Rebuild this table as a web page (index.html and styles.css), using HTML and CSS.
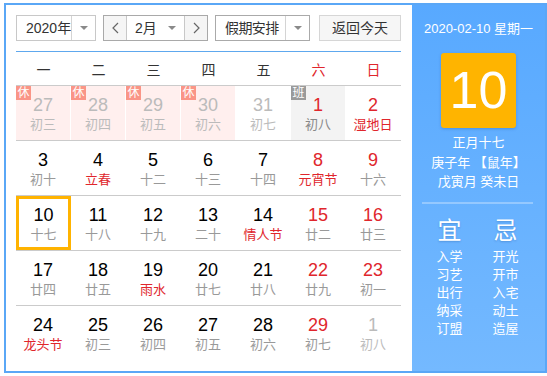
FILE: index.html
```html
<!DOCTYPE html>
<html lang="zh-CN">
<head>
<meta charset="utf-8">
<title>万年历</title>
<link rel="stylesheet" href="styles.css">
</head>
<body>
<div class="calendar">
  <div class="main">
    <div class="toolbar">
      <div class="select year">
        <span class="label">2020年</span>
        <span class="caret-box"><i class="caret"></i></span>
      </div>
      <div class="month-group">
        <span class="nav"><svg width="7" height="12" viewBox="0 0 7 12"><path d="M6 1 L1 6 L6 11" fill="none" stroke="#666" stroke-width="1.2"/></svg></span>
        <span class="month">
          <span class="label">2月</span>
          <i class="caret"></i>
        </span>
        <span class="nav"><svg width="7" height="12" viewBox="0 0 7 12"><path d="M1 1 L6 6 L1 11" fill="none" stroke="#666" stroke-width="1.2"/></svg></span>
      </div>
      <div class="select holiday">
        <span class="label">假期安排</span>
        <span class="caret-box"><i class="caret"></i></span>
      </div>
      <div class="today-btn">返回今天</div>
    </div>
    <div class="weekdays">
      <span>一</span><span>二</span><span>三</span><span>四</span><span>五</span><span class="red">六</span><span class="red">日</span>
    </div>
    <div class="week">
      <div class="cell rest other"><b class="badge">休</b><span class="num">27</span><span class="lunar">初三</span></div>
      <div class="cell rest other"><b class="badge">休</b><span class="num">28</span><span class="lunar">初四</span></div>
      <div class="cell rest other"><b class="badge">休</b><span class="num">29</span><span class="lunar">初五</span></div>
      <div class="cell rest other"><b class="badge">休</b><span class="num">30</span><span class="lunar">初六</span></div>
      <div class="cell other"><span class="num">31</span><span class="lunar">初七</span></div>
      <div class="cell work weekend"><b class="badge gray">班</b><span class="num">1</span><span class="lunar">初八</span></div>
      <div class="cell weekend"><span class="num">2</span><span class="lunar fest">湿地日</span></div>
    </div>
    <div class="week">
      <div class="cell"><span class="num">3</span><span class="lunar">初十</span></div>
      <div class="cell"><span class="num">4</span><span class="lunar fest">立春</span></div>
      <div class="cell"><span class="num">5</span><span class="lunar">十二</span></div>
      <div class="cell"><span class="num">6</span><span class="lunar">十三</span></div>
      <div class="cell"><span class="num">7</span><span class="lunar">十四</span></div>
      <div class="cell weekend"><span class="num">8</span><span class="lunar fest">元宵节</span></div>
      <div class="cell weekend"><span class="num">9</span><span class="lunar">十六</span></div>
    </div>
    <div class="week">
      <div class="cell selected"><span class="num">10</span><span class="lunar">十七</span></div>
      <div class="cell"><span class="num">11</span><span class="lunar">十八</span></div>
      <div class="cell"><span class="num">12</span><span class="lunar">十九</span></div>
      <div class="cell"><span class="num">13</span><span class="lunar">二十</span></div>
      <div class="cell"><span class="num">14</span><span class="lunar fest">情人节</span></div>
      <div class="cell weekend"><span class="num">15</span><span class="lunar">廿二</span></div>
      <div class="cell weekend"><span class="num">16</span><span class="lunar">廿三</span></div>
    </div>
    <div class="week">
      <div class="cell"><span class="num">17</span><span class="lunar">廿四</span></div>
      <div class="cell"><span class="num">18</span><span class="lunar">廿五</span></div>
      <div class="cell"><span class="num">19</span><span class="lunar fest">雨水</span></div>
      <div class="cell"><span class="num">20</span><span class="lunar">廿七</span></div>
      <div class="cell"><span class="num">21</span><span class="lunar">廿八</span></div>
      <div class="cell weekend"><span class="num">22</span><span class="lunar">廿九</span></div>
      <div class="cell weekend"><span class="num">23</span><span class="lunar">初一</span></div>
    </div>
    <div class="week">
      <div class="cell"><span class="num">24</span><span class="lunar fest">龙头节</span></div>
      <div class="cell"><span class="num">25</span><span class="lunar">初三</span></div>
      <div class="cell"><span class="num">26</span><span class="lunar">初四</span></div>
      <div class="cell"><span class="num">27</span><span class="lunar">初五</span></div>
      <div class="cell"><span class="num">28</span><span class="lunar">初六</span></div>
      <div class="cell weekend"><span class="num">29</span><span class="lunar">初七</span></div>
      <div class="cell other"><span class="num">1</span><span class="lunar">初八</span></div>
    </div>
  </div>
  <div class="panel">
    <div class="date-line">2020-02-10 星期一</div>
    <div class="big-day">10</div>
    <div class="info">正月十七</div>
    <div class="info">庚子年 【鼠年】</div>
    <div class="info">戊寅月 癸未日</div>
    <div class="divider"></div>
    <div class="yiji">
      <div class="col">
        <div class="head">宜</div>
        <div class="item">入学</div>
        <div class="item">习艺</div>
        <div class="item">出行</div>
        <div class="item">纳采</div>
        <div class="item">订盟</div>
      </div>
      <div class="col">
        <div class="head">忌</div>
        <div class="item">开光</div>
        <div class="item">开市</div>
        <div class="item">入宅</div>
        <div class="item">动土</div>
        <div class="item">造屋</div>
      </div>
    </div>
  </div>
</div>
</body>
</html>
```
FILE: styles.css
```css
html, body {
  margin: 0;
  padding: 0;
  background: #fff;
  overflow: hidden;
}
body {
  font-family: "Liberation Sans", "Noto Sans CJK SC", sans-serif;
  color: #333;
}
.calendar {
  margin: 3px 0 0 4px;
  width: 543px;
  height: 370px;
  box-sizing: border-box;
  border: 2px solid #5aa7f6;
  display: flex;
}
.main {
  width: 406px;
  box-sizing: border-box;
  padding: 10px 11px 0 10px;
}
.toolbar {
  display: flex;
  height: 26px;
  padding-bottom: 10px;
  border-bottom: 1px solid #5ea8ee;
  font-size: 14px;
  color: #333;
  white-space: nowrap;
}
.select {
  display: flex;
  box-sizing: border-box;
  height: 26px;
  border: 1px solid #c8c8c8;
  background: #fff;
}
.select .label {
  flex: 1;
  min-width: 0;
  line-height: 24px;
  padding-left: 9px;
  white-space: nowrap;
}
.caret-box {
  flex: none;
  width: 23px;
  border-left: 1px solid #d4d4d4;
  display: flex;
  align-items: center;
  justify-content: center;
}
.caret {
  display: block;
  width: 0;
  height: 0;
  border-left: 4px solid transparent;
  border-right: 4px solid transparent;
  border-top: 4px solid #8a8a8a;
}
.year { width: 80px; }
.month-group {
  margin-left: 7px;
  width: 105px;
  height: 26px;
  box-sizing: border-box;
  border: 1px solid #a9a9a9;
  display: flex;
}
.nav {
  width: 22px;
  background: #f5f5f5;
  display: flex;
  align-items: center;
  justify-content: center;
}
.month {
  flex: 1;
  display: flex;
  align-items: center;
  border-left: 1px solid #c8c8c8;
  border-right: 1px solid #c8c8c8;
  background: #fff;
}
.month .label {
  line-height: 24px;
  padding-left: 8px;
  flex: 1;
}
.month .caret { margin-right: 8px; }
.holiday {
  margin-left: 7px;
  width: 95px;
  border-color: #aaa;
}
.holiday .label {
  padding-left: 9px;
  letter-spacing: -0.6px;
}
.holiday .caret-box { width: 23px; }
.today-btn {
  margin-left: 9px;
  width: 82px;
  height: 26px;
  box-sizing: border-box;
  border: 1px solid #d6d6d6;
  background: #f6f6f6;
  text-align: center;
  line-height: 24px;
}
.weekdays {
  display: grid;
  grid-template-columns: repeat(7, 55px);
  height: 33px;
  align-items: center;
  text-align: center;
  font-size: 14px;
  color: #333;
}
.red { color: #e0262c; }
.week {
  display: grid;
  grid-template-columns: repeat(7, 55px);
  border-top: 1px solid #cbcbcb;
}
.cell {
  position: relative;
  height: 54px;
  box-sizing: border-box;
  border-right: 1px solid #fff;
  display: flex;
  flex-direction: column;
  align-items: center;
  padding-top: 9px;
}
.num {
  font-size: 18px;
  line-height: 21px;
  color: #000;
}
.lunar {
  font-size: 13px;
  line-height: 18px;
  color: #999;
}
.lunar.fest { color: #e0262c; }
.weekend .num { color: #e0262c; }
.rest { background: #ffefee; }
.work { background: #f3f3f3; }
.work .lunar { color: #888; }
.other .num, .other .lunar { color: #bbb; }
.badge {
  position: absolute;
  left: 0;
  top: 0;
  width: 15px;
  height: 14px;
  font-size: 12px;
  line-height: 14px;
  font-weight: normal;
  color: #fff;
  background: #fa9587;
  text-align: center;
}
.badge.gray { background: #9a9a9a; }
.selected {
  border: 3px solid #ffb300;
  padding-top: 6px;
}
.panel {
  flex: 1;
  background: linear-gradient(#58a9ff, #74b9ff);
  color: #fff;
  text-align: center;
  padding-top: 15px;
}
.date-line {
  font-size: 13px;
  line-height: 18px;
}
.big-day {
  width: 75px;
  height: 75px;
  margin: 15px auto 0;
  background: #ffb400;
  border-radius: 3px;
  box-shadow: 0 1px 3px rgba(0, 60, 140, 0.25);
  font-size: 52px;
  line-height: 75px;
}
.info {
  font-size: 13px;
  line-height: 19.5px;
}
.big-day + .info { margin-top: 5px; }
.divider {
  height: 2px;
  margin: 10px 12px 0 10px;
  background: rgba(255, 255, 255, 0.3);
}
.yiji {
  display: flex;
  justify-content: center;
  margin-top: 12px;
  margin-right: 2px;
}
.col { width: 56px; }
.head {
  font-size: 24px;
  line-height: 30px;
  text-shadow: 0 1px 2px rgba(0, 50, 120, 0.25);
}
.item {
  font-size: 13px;
  line-height: 18px;
}
.head + .item { margin-top: 2px; }
```
